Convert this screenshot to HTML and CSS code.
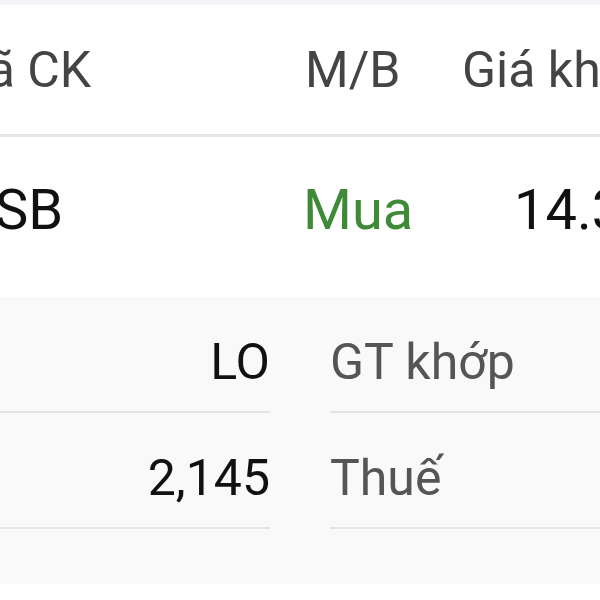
FILE: index.html
```html
<!DOCTYPE html>
<html lang="vi">
<head>
  <meta charset="UTF-8" />
  <meta name="viewport" content="width=device-width, initial-scale=1" />
  <title>Lệnh đặt</title>
  <link rel="stylesheet" href="styles.css">
</head>
<body>
  <div class="topbar"></div>

  <div class="order-table">
    <div class="row head">
      <div class="cell code">Mã CK</div>
      <div class="cell side">M/B</div>
      <div class="cell price">Giá khớp</div>
    </div>
    <div class="row item">
      <div class="cell code">MSB</div>
      <div class="cell side buy">Mua</div>
      <div class="cell price">14.350</div>
    </div>
  </div>

  <div class="detail">
    <div class="detail-col left">
      <div class="detail-row">LO</div>
      <div class="detail-row">2,145</div>
    </div>
    <div class="detail-col right">
      <div class="detail-row">GT khớp</div>
      <div class="detail-row">Thuế</div>
    </div>
  </div>
</body>
</html>
```

FILE: styles.css
```css
/* Reset and basics */
* {
  box-sizing: border-box;
}
body {
  margin: 0;
  background: #fff;
  color: #111;
  font-family: Roboto, "Noto Sans", sans-serif;
  font-size: 50px;
  overflow: hidden;
  width: 600px;
}

.topbar {
  height: 5px;
  background: #f2f2f7;
}

/* Order table */
.order-table {
  margin-left: -48px;
  width: 760px;
}
.row {
  display: grid;
  grid-template-columns: 353px 157px 1fr;
  white-space: nowrap;
}
.row.head {
  height: 132px;
  padding-top: 30px;
  line-height: 70px;
  color: #444;
  border-bottom: 3px solid #e6e6e6;
}
.row.head .code {
  margin-left: -8px;
}
.row.item {
  height: 160px;
  padding-top: 38px;
  line-height: 70px;
  font-size: 56px;
}
.row.item .code {
  margin-left: -6px;
}
.row.item .side {
  margin-left: -2px;
}
.row.item .price {
  padding-left: 52px;
}
.buy {
  color: #3f8a37;
}

/* Detail panel */
.detail {
  display: flex;
  gap: 60px;
  background: #f9f9f9;
  padding-bottom: 55px;
  margin-left: -100px;
  width: 800px;
}
.detail-col.left {
  width: 370px;
  text-align: right;
}
.detail-col.right {
  flex: 1;
  color: #555;
}
.detail-row {
  height: 116px;
  padding-top: 30px;
  line-height: 70px;
  border-bottom: 2px solid #e4e4e4;
}
```
